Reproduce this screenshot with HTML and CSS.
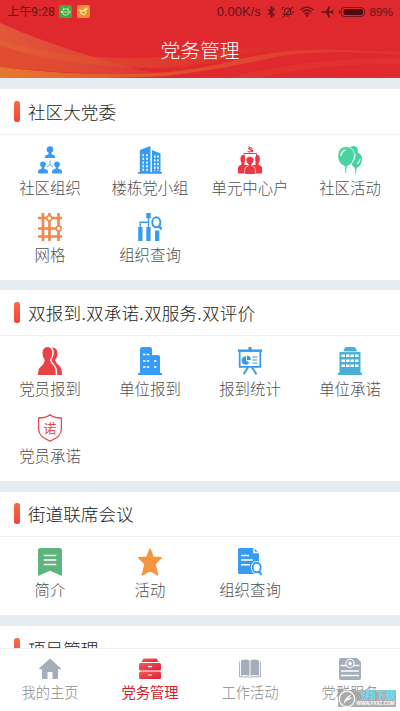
FILE: index.html
```html
<!DOCTYPE html>
<html lang="zh-CN">
<head>
<meta charset="utf-8">
<title>党务管理</title>
<link rel="stylesheet" href="styles.css">
</head>
<body>
<div class="app">
  <header class="header">
    <svg class="waves" viewBox="0 0 400 78" preserveAspectRatio="none">
      <defs>
        <linearGradient id="w1" x1="0" x2="1"><stop offset="0" stop-color="#e2573c"/><stop offset="1" stop-color="#de3631"/></linearGradient>
        <linearGradient id="w2" x1="0" x2="1"><stop offset="0" stop-color="#e2652e"/><stop offset=".4" stop-color="#e05030"/><stop offset="1" stop-color="#e0282e"/></linearGradient>
        <linearGradient id="w3" x1="0" x2="1"><stop offset="0" stop-color="#e89230"/><stop offset=".45" stop-color="#e25a2e"/><stop offset="1" stop-color="#e0382e"/></linearGradient>
      </defs>
      <path d="M0 23Q70 54 162 75L100 74Q50 72 0 67Z" fill="url(#w1)"/>
      <path d="M0 40Q60 58 130 58Q165 58 200 52Q245 45 300 49Q260 50 225 59Q190 68 150 68Q60 66 0 45Z" fill="url(#w2)" opacity=".6"/>
      <path d="M0 46Q50 60 92 73Q40 71 0 67Z" fill="#e04a2e" opacity=".7"/>
      <path d="M0 67Q60 74 105 74Q165 76 220 64Q280 47 345 50L400 52V55Q330 49 280 56Q220 70 165 76Q130 78 80 78H0Z" fill="url(#w3)" opacity=".75"/>
      <path d="M230 78Q300 58 400 58V64Q320 63 260 78Z" fill="#e44435" opacity=".35"/>
    </svg>
    <div class="status">
      <span class="clock">上午9:28</span>
      <svg class="badge" viewBox="0 0 13 13"><rect width="13" height="13" rx="2" fill="#45a646"/><g fill="none" stroke="#c5efb4"><rect x="3.500" y="4" width="6.500" height="6" rx="2.500"/><path d="M4 2.500l1 1.500M9.500 2.500l-1 1.500M2.500 6v2M11 6v2M4 7h5.500"/></g></svg>
      <svg class="badge second" viewBox="0 0 13 13"><rect width="13" height="13" rx="2" fill="#e8912e"/><path d="M3 5l3 1 3-3 1 1-2 2 1 1-2 3-3-2z" fill="none" stroke="#ffe0a8" stroke-width="1.200"/></svg>
      <span class="speed">0.00K/s</span>
      <svg class="s-bt" viewBox="0 0 8 12"><path d="M1 3.500l6 5L4 11V1l3 2.500-6 5" fill="none" stroke="#641519" stroke-width="1.300"/></svg>
      <svg class="s-mute" viewBox="0 0 13 12"><path d="M2.500 8.500Q3.500 7 3.500 5Q4 2 6.500 2T9.500 5Q9.500 7 10.500 8.500ZM5 10h3M1.500 11.500L12 .8M1 4Q1 2 3 1M12 5v2" fill="none" stroke="#641519" stroke-width="1.100"/></svg>
      <svg class="s-wifi" viewBox="0 0 14 11"><path d="M.7 4Q7-1.800 13.300 4M2.700 6Q7 2 11.300 6M4.700 8Q7 6 9.300 8" fill="none" stroke="#641519" stroke-width="1.300"/><circle cx="7" cy="9.500" r="1.200" fill="#641519"/></svg>
      <svg class="s-plane" viewBox="0 0 13 12"><path d="M0 6L1 5.200H5L8 0H9L8 5.200H10.500L12 3.500H12.600L12 6L12.600 8.500H12L10.500 6.800H8L9 12H8L5 6.800H1Z" fill="#641519"/></svg>
      <svg class="s-batt" viewBox="0 0 26 10"><rect x="2" y=".5" width="23.500" height="9" rx="3.500" fill="none" stroke="#641519" stroke-width=".9"/><rect x="4.500" y="2" width="19.500" height="6" rx="2" fill="#4d0b10"/><path d="M.6 3.500v3" stroke="#641519"/></svg>
      <span class="pct">89%</span>
    </div>
    <h1 class="title">党务管理</h1>
  </header>

  <main class="content">
    <section class="card">
      <h2 class="card-head">社区大党委</h2>
      <div class="grid">
        <div class="cell">
          <svg class="icon" viewBox="0 0 24 28" fill="#379cf0"><circle cx="12" cy="3.600" r="3.300"/><path d="M10.500 6h3v2.200l3 1.200q.7.500.7 2.600H6.800q0-2.100.7-2.600l3-1.200z"/><circle cx="5" cy="18.300" r="2.900"/><path d="M3.700 20.500h2.600v2.300l3 1q.7.600.7 3.700H0q0-3.100.7-3.700l3-1z"/><circle cx="19" cy="18.300" r="2.900"/><path d="M17.700 20.500h2.600v2.300l3 1q.7.600.7 3.700H14q0-3.100.7-3.700l3-1z"/><path d="M12 14.500v4M12 18.500l-3 2.500M12 18.500l3 2.500" stroke="#379cf0" stroke-width=".9"/></svg>
          <span class="label">社区组织</span>
        </div>
        <div class="cell">
          <svg class="icon" viewBox="0 0 24 28"><path d="M0 26h1.800V4L12.500 0v26H14V4l8.500 3.500V26H24v1.700H0z" fill="#379cf0"/><path d="M5.300 8v17M9 8v17M16.800 9.500V25M20 9.500V25" stroke="#fff" stroke-width="1.500" stroke-dasharray="2.300 1.400"/></svg>
          <span class="label">楼栋党小组</span>
        </div>
        <div class="cell">
          <svg class="icon" viewBox="0 0 24 28" fill="#ee3743"><path d="M10.500 1q4.500.3 3.500 4.300M9.500 5.500q3 1 5.500-1M10 3l2-1.300M11 2.500l4 3.500" fill="none" stroke="#ee3743" stroke-width="1.100"/><path d="M6 12V7.500h12.500V12" fill="none" stroke="#ee3743"/><ellipse cx="4.800" cy="13" rx="2.300" ry="4"/><ellipse cx="19.500" cy="13" rx="2.300" ry="4"/><path d="M3.500 16h3v3H10v8.500H0V21.500q0-1.500 3.500-3zM17.500 16h3v2.500Q24 20 24 21.500v6H14V19h3.500z"/><path d="M6.700 28.500v-5.500q0-2.500 3.500-3.200v-1.500Q7.800 16.500 8 13.600Q8.200 10.500 12 10.500t4 3.100q0 3-2.200 4.700v1.500q3.500.7 3.500 3.200v5.500z" stroke="#fff" stroke-width=".6"/></svg>
          <span class="label">单元中心户</span>
        </div>
        <div class="cell">
          <svg class="icon" viewBox="0 0 24 28" fill="#49d3a0"><circle cx="15.500" cy="4.500" r="4.500"/><path d="M18 6q6.500 1.500 6 8-.8 6-5.500 8l.5 1.500h-2.500l.5-1.500q-3-1.500-3.500-4Q18 13 18 6z"/><path d="M17.700 23v4.500" stroke="#49d3a0"/><path d="M7.800.5Q16 1 16.500 9.500 15.500 18 9 20.500l.8 1.700H6.200L7 20.500Q0 18 -.2 9.500.5 1 7.800.5z" stroke="#fff" stroke-width=".7"/><path d="M8 22q-1 2 0 5" fill="none" stroke="#49d3a0"/><path d="M3 10q0-4.500 4.500-6.200M22 13q-.5 3-2.700 4.800" fill="none" stroke="#fff" stroke-width="1.300"/></svg>
          <span class="label">社区活动</span>
        </div>
        <div class="cell">
          <svg class="icon" viewBox="0 0 24 28" fill="none" stroke="#ee8a50" stroke-width="2.700"><path d="M0 5h24M0 15.500h24M0 23.500h24M5 0v28M11.500 0v28M20.500 0v28"/><circle cx="11.300" cy="5.300" r="2.500" fill="#fff" stroke-width="1.500"/><circle cx="20.700" cy="15.500" r="2.500" fill="#fff" stroke-width="1.500"/></svg>
          <span class="label">网格</span>
        </div>
        <div class="cell">
          <svg class="icon" viewBox="0 0 24 28" fill="#379cf0"><path d="M8.300 0h4.400v5.300H8.300zM.2 14h4.300v14H.2zM8.300 14h4.300v14H8.300zM17 17.500h4.300V28H17z"/><path d="M10.500 4v10M2.200 14V9.300h8.300" fill="none" stroke="#379cf0" stroke-width="1.400"/><ellipse cx="18.300" cy="9.300" rx="4" ry="5" fill="#fff" stroke="#379cf0" stroke-width="2"/><path d="M21 13l2.700 3.500" stroke="#379cf0" stroke-width="2.300"/></svg>
          <span class="label">组织查询</span>
        </div>
      </div>
    </section>

    <section class="card">
      <h2 class="card-head long">双报到.双承诺.双服务.双评价</h2>
      <div class="grid">
        <div class="cell">
          <svg class="icon" viewBox="0 0 24 28" fill="#ea4245"><path d="M9.500 0q4.800.3 4.800 6 0 4-2.300 7 .2 2.500 3.500 5.500 2 2 2.300 9.500H0q0-6 2.500-8 4-3.500 4.300-7Q4.500 10 4.500 6q0-5.700 5-6z"/><path d="M13.500.5q5.800-.5 6 6 0 3.500-2.300 6.500.2 2.500 3.500 5Q24 20.500 24 28h-4.800q.3-7.500-2.700-10.200-3-2.800-3-5 2.300-3.300 2.300-7Q16 2 13.500.5z"/></svg>
          <span class="label">党员报到</span>
        </div>
        <div class="cell">
          <svg class="icon" viewBox="0 0 24 28"><path d="M0 26h2V2q0-2 2-2h8q2 0 2 2v6h6q2 0 2 2v16h2v2H0z" fill="#379cf8"/><path d="M5 7.500h6.500M5 14h6.500M5 20h6.500M16 14h3M16 20h3" stroke="#fff" stroke-width="1.600" stroke-dasharray="2.500 1.300"/></svg>
          <span class="label">单位报到</span>
        </div>
        <div class="cell">
          <svg class="icon" viewBox="0 0 24 28" fill="none" stroke="#3798e8"><path d="M0 3.700h24" stroke-width="2.400"/><path d="M12 0v4" stroke-width="3"/><path d="M1.700 5v14.800h20.600V5" stroke-width="1.700"/><path d="M10 20.500l-4.500 6.700M14 20.500l4.500 6.700" stroke-width="2"/><path d="M8 9.300a4.200 4.200 0 1 0 3.300 6.500L8 13.500z" fill="#3798e8" stroke="none"/><path d="M9 8.500q4 .3 3.800 4.500H9z" fill="#3798e8" stroke="none"/><path d="M14.500 10h5M14.500 13h5M14.500 16h5" stroke-width="1.200"/></svg>
          <span class="label">报到统计</span>
        </div>
        <div class="cell">
          <svg class="icon" viewBox="0 0 24 28"><path d="M0 25.800h1.500V5h4.300V1.500h1.500V0H17v1.500h1.500V5h4v20.800H24V28H0z" fill="#4aaed6"/><path d="M3.500 8.700h17M3.500 13.700h17M3.500 18.700h17" stroke="#fff" stroke-width="2.600" stroke-dasharray="3.500 1"/><path d="M6 4.700h12" stroke="#fff" stroke-width=".7"/></svg>
          <span class="label">单位承诺</span>
        </div>
        <div class="cell">
          <svg class="icon" viewBox="0 0 24 28"><path d="M12 .8Q15.500 4 23.400 4V15q-.2 8-11.400 12.200Q.8 23 .6 15V4Q8.500 4 12 .8z" fill="none" stroke="#e44a50" stroke-width="1.300"/><text x="12" y="18.700" text-anchor="middle" class="pledge">诺</text></svg>
          <span class="label">党员承诺</span>
        </div>
      </div>
    </section>

    <section class="card">
      <h2 class="card-head">街道联席会议</h2>
      <div class="grid">
        <div class="cell">
          <svg class="icon" viewBox="0 0 24 28"><path d="M0 2.500Q0 0 2.500 0h19Q24 0 24 2.500V28l-12-5.200L0 28z" fill="#5bb57d"/><path d="M5.700 7.500h12.600M5.700 12h12.600M5.700 16.500h12.600" stroke="#fff" stroke-width="1.700"/></svg>
          <span class="label">简介</span>
        </div>
        <div class="cell">
          <svg class="icon" viewBox="0 0 24 28"><path d="M12 1.300l3.100 8 8.100.5-6.300 6.200 2.600 10.800L12 22l-7.500 4.800L7.100 16 .8 9.800l8.100-.5z" fill="#f79440" stroke="#f79440" stroke-width="1.600" stroke-linejoin="round"/></svg>
          <span class="label">活动</span>
        </div>
        <div class="cell">
          <svg class="icon" viewBox="0 0 24 28"><path d="M1.500 0H16l5 5v21H1.500Q0 26 0 24.500v-23Q0 0 1.500 0z" fill="#379cf0"/><path d="M16 0v4.500h5M3 7.500h8M3 12h12M3 16.700h9" fill="none" stroke="#fff" stroke-width="1.500"/><ellipse cx="18.700" cy="19.500" rx="5.800" ry="6.600" fill="#fff"/><ellipse cx="18.700" cy="19.500" rx="4" ry="4.800" fill="#fff" stroke="#379cf0" stroke-width="1.900"/><path d="M21 23.500l2.500 3.300" stroke="#379cf0" stroke-width="2.200"/></svg>
          <span class="label">组织查询</span>
        </div>
      </div>
    </section>

    <section class="card">
      <h2 class="card-head">项目管理</h2>
    </section>
  </main>

  <nav class="tabs">
    <div class="tab">
      <svg class="tab-icon" viewBox="0 0 22 22"><path d="M11 .5L21.500 10q.7 1-.5 1.300H19V20q0 1-1 1h-4.500v-7h-5v7H4q-1 0-1-1v-8.700H1Q-.2 11 .5 10z" fill="#a4adb9"/></svg>
      <span>我的主页</span>
    </div>
    <div class="tab active">
      <svg class="tab-icon" viewBox="0 0 22 22"><defs><linearGradient id="red" x1="0" y1="0" x2="1" y2="1"><stop stop-color="#f0605b"/><stop offset="1" stop-color="#e11b35"/></linearGradient></defs><path d="M4.500.5h13L19.500 4h-17z" fill="url(#red)"/><rect y="5" width="22" height="7.500" rx="1.500" fill="url(#red)"/><rect y="13.500" width="22" height="7.500" rx="1.500" fill="url(#red)"/><path d="M9 8.700h4M9 17h4" stroke="#fff" stroke-width="1.200"/></svg>
      <span>党务管理</span>
    </div>
    <div class="tab">
      <svg class="tab-icon" viewBox="0 0 22 22" fill="#a4adb9"><path d="M2 2.500Q7 .5 10.500 2.500v15.200Q7 16.500 2 17.500zM11.500 2.500Q15 .5 20 2.500v15q-5-1-8.500.2z"/><path d="M.6 3.500v15.300h8.800l1.600.6 1.600-.6h8.800V3.500" fill="none" stroke="#a4adb9" stroke-width="1"/></svg>
      <span>工作活动</span>
    </div>
    <div class="tab">
      <svg class="tab-icon" viewBox="0 0 22 22"><path d="M2 0h16l4 4v16q0 2-2 2H2q-2 0-2-2V2Q0 0 2 0z" fill="#a4adb9"/><path d="M1.500 7.500h19M2 13h18M2 17.500h18" stroke="#fff" stroke-width="1.500"/><circle cx="11" cy="5.500" r="4.200" fill="#a4adb9" stroke="#fff" stroke-width="1.100"/><path d="M11 2.700l.8 1.900h2l-1.500 1.300.6 2L11 6.800 9.100 7.900l.6-2-1.500-1.300h2z" fill="#fff"/></svg>
      <span>党群服务</span>
    </div>
  </nav>

  <div class="mark">
    <svg class="mark-logo" viewBox="0 0 18 18"><circle cx="9" cy="9" r="7.700" fill="#a9a9aa" stroke="#f3f3f3" stroke-width="1.400"/><path d="M5.500 15Q6 7 13.500 4.500 12 7 9.500 7.500q2 .5 4-.5-1 3-4.500 3.500-2.500 1-3.500 4.500z" fill="#fff"/></svg>
    <div class="mark-text"><b>飞翔下载</b><small>WWW.FXXZ.COM</small></div>
  </div>
</div>
</body>
</html>
```
FILE: styles.css
```css
* { box-sizing: border-box; margin: 0; padding: 0; }
body {
  width: 400px;
  height: 711px;
  overflow: hidden;
  font-family: "Noto Sans CJK SC", sans-serif;
  font-weight: 300;
}
svg { display: block; flex: none; }
.app {
  position: relative;
  display: flex;
  flex-direction: column;
  height: 711px;
  background: #e7ecf0;
}
.header {
  position: relative;
  flex: none;
  height: 78px;
  background: #df292e;
}
.waves { position: absolute; inset: 0; width: 400px; height: 78px; }
.status {
  position: relative;
  display: flex;
  align-items: center;
  height: 23px;
  padding: 0 7px;
  color: #641519;
  font: 400 13px/22px "Liberation Sans", "Noto Sans CJK SC", sans-serif;
}
.clock { width: 53px; padding-top: 1px; font-family: Roboto, "Noto Sans CJK SC", sans-serif; font-size: 12.2px; white-space: nowrap; }
.badge { width: 13px; height: 13px; }
.second { margin-left: 5px; }
.speed { width: 45px; margin-left: 126.5px; padding-top: 1px; white-space: nowrap; }
.s-bt { width: 8px; height: 12px; margin-left: 6.500px; }
.s-mute { width: 13px; height: 12px; margin-left: 6px; }
.s-wifi { width: 14px; height: 11px; margin-left: 6px; }
.s-plane { width: 13px; height: 12px; margin-left: 7px; }
.s-batt { width: 26px; height: 10px; margin-left: 5px; }
.pct { margin-left: 4px; padding-top: 1px; font-size: 11.8px; }
.title {
  position: relative;
  color: #fff;
  font-size: 19.8px;
  font-weight: 300;
  line-height: 30px;
  text-align: center;
  margin-top: 12px;
}
.content { flex: 1; min-height: 0; overflow: hidden; padding-top: 11px; }
.card { background: #fff; margin-bottom: 10.8px; }
.card-head {
  display: flex;
  align-items: center;
  gap: 8px;
  height: 45.500px;
  padding-left: 14px;
  border-bottom: 1px solid #f0f1f3;
  color: #222;
  font-size: 17.6px;
  font-weight: 300;
  white-space: nowrap;
}
.card-head::before {
  content: "";
  width: 6px;
  height: 21px;
  border-radius: 2.500px;
  background: linear-gradient(#fa6b47, #f4423c);
}
.long { letter-spacing: .2px; }
.grid {
  display: grid;
  grid-template-columns: repeat(4, 100px);
  grid-auto-rows: 67px;
  padding-top: 11px;
}
.cell { display: flex; flex-direction: column; align-items: center; }
.icon { width: 24px; height: 28px; }
.label { margin-top: 3px; color: #505050; font-size: 15.4px; line-height: 20px; white-space: nowrap; }
.pledge { fill: #e44a50; font-size: 13px; font-weight: 400; }
.tabs {
  display: flex;
  flex: none;
  height: 63.500px;
  padding-top: 9px;
  background: #fff;
  border-top: 1px solid #eef0f2;
}
.tab {
  display: flex;
  flex: 1;
  flex-direction: column;
  align-items: center;
  color: #8c8c8c;
  font-size: 14.3px;
  line-height: 20px;
}
.tab-icon { width: 22px; height: 22px; margin-bottom: 2px; }
.active { color: #d31d2b; font-weight: 400; }
.mark {
  position: absolute;
  left: 338px;
  top: 690px;
  display: flex;
  width: 58px;
  height: 17px;
  background: rgba(155, 155, 158, .8);
}
.mark-logo { width: 18px; height: 18px; }
.mark-text { display: flex; flex-direction: column; width: 39px; text-align: center; }
.mark-text b { color: #6fdcf0; font-size: 9.8px; font-weight: 700; line-height: 11px; white-space: nowrap; }
.mark-text small { color: #fff; font: 700 4.6px/5px "Liberation Sans", sans-serif; white-space: nowrap; }
```
